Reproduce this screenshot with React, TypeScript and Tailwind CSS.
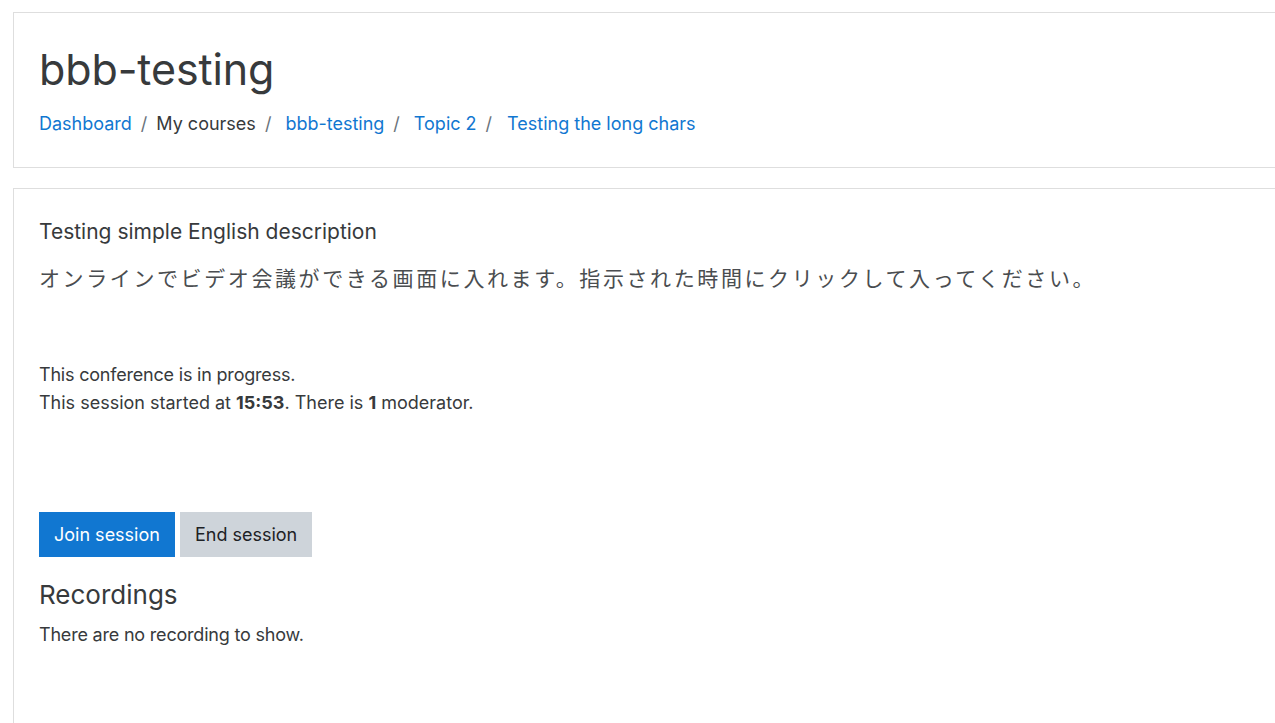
const font = "font-['Inter','Noto_Sans_CJK_JP',sans-serif]";

function Crumb({ children, link, gapLeft }: { children: string; link?: boolean; gapLeft?: string }) {
  return (
    <span className={gapLeft}>
      <span className={link ? "text-[#1177d1]" : "text-[#373a3c]"}>{children}</span>
    </span>
  );
}

function Sep() {
  return <span className="px-[9px] text-[#6a737b]">/</span>;
}

export default function App() {
  return (
    <div className={`min-h-[723px] bg-white pl-[13px] pt-[12px] text-[#373a3c] ${font}`}>
      <header className="border border-r-0 border-[#dedede] px-[25px] pb-[30px] pt-[29px]">
        <h1 className="text-[43px] leading-[54px] tracking-[-0.1px]">bbb-testing</h1>
        <nav className="mt-[14px] flex text-[18px] leading-[27px]">
          <Crumb link>Dashboard</Crumb>
          <Sep />
          <Crumb>My courses</Crumb>
          <Sep />
          <Crumb link gapLeft="pl-[5px]">bbb-testing</Crumb>
          <Sep />
          <Crumb link gapLeft="pl-[5px]">Topic 2</Crumb>
          <Sep />
          <Crumb link gapLeft="pl-[6px]">Testing the long chars</Crumb>
        </nav>
      </header>

      <main className="mt-[20px] min-h-[540px] border border-b-0 border-r-0 border-[#dedede] px-[25px] pt-[29px]">
        <h2 className="text-[21px] leading-[28px]">Testing simple English description</h2>
        <p className="mt-[18px] text-[21px] leading-[30px] tracking-[2.6px] text-[#4a4d50]">
          オンラインでビデオ会議ができる画面に入れます。指示された時間にクリックして入ってください。
        </p>

        <div className="mt-[67px] text-[18px] leading-[28px]">
          <p className="tracking-[-0.2px]">This conference is in progress.</p>
          <p>
            This session started at <b className="font-bold">15:53</b>. There is <b className="font-bold">1</b> moderator.
          </p>
        </div>

        <div className="mt-[95px] flex gap-[5px]">
          <button className="h-[45px] bg-[#1177d1] px-[15px] text-[18px] text-white">Join session</button>
          <button className="h-[45px] bg-[#ced4da] px-[15px] text-[18px] text-[#1d2125]">End session</button>
        </div>

        <h3 className="mt-[21px] text-[26px] leading-[34px]">Recordings</h3>
        <p className="mt-[9px] text-[18px] leading-[27px] tracking-[-0.2px]">There are no recording to show.</p>
      </main>
    </div>
  );
}
